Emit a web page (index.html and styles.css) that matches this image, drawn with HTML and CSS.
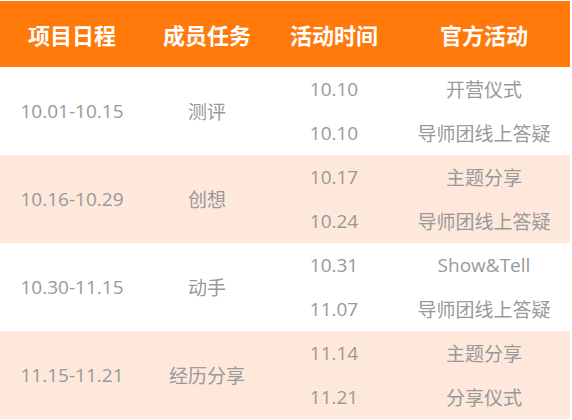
FILE: index.html
```html
<!DOCTYPE html>
<html lang="zh-CN">
<head>
<meta charset="utf-8">
<title>项目日程</title>
<link rel="stylesheet" href="styles.css">
</head>
<body>
<div class="wrap">
<table class="schedule">
  <colgroup>
    <col class="c1"><col class="c2"><col class="c3"><col class="c4">
  </colgroup>
  <thead>
    <tr><th>项目日程</th><th>成员任务</th><th>活动时间</th><th>官方活动</th></tr>
  </thead>
  <tbody class="g-white">
    <tr><td rowspan="2">10.01-10.15</td><td rowspan="2">测评</td><td>10.10</td><td>开营仪式</td></tr>
    <tr><td>10.10</td><td>导师团线上答疑</td></tr>
  </tbody>
  <tbody class="g-peach">
    <tr><td rowspan="2">10.16-10.29</td><td rowspan="2">创想</td><td>10.17</td><td>主题分享</td></tr>
    <tr><td>10.24</td><td>导师团线上答疑</td></tr>
  </tbody>
  <tbody class="g-white">
    <tr><td rowspan="2">10.30-11.15</td><td rowspan="2">动手</td><td>10.31</td><td>Show&amp;Tell</td></tr>
    <tr><td>11.07</td><td>导师团线上答疑</td></tr>
  </tbody>
  <tbody class="g-peach">
    <tr><td rowspan="2">11.15-11.21</td><td rowspan="2">经历分享</td><td>11.14</td><td>主题分享</td></tr>
    <tr><td>11.21</td><td>分享仪式</td></tr>
  </tbody>
</table>
</div>
</body>
</html>
```
FILE: styles.css
```css
html, body {
  margin: 0;
  padding: 0;
  background: #ffffff;
}
.wrap {
  padding-top: 1px;
  width: 570px;
}
.schedule {
  width: 570px;
  border-collapse: collapse;
  table-layout: fixed;
  font-family: "Open Sans", "Noto Sans CJK SC", sans-serif;
}
.c1 { width: 144px; }
.c2 { width: 126px; }
.c3 { width: 128px; }
.c4 { width: 172px; }
.schedule th {
  height: 66px;
  padding: 0;
  background: #ff790b;
  color: #ffffff;
  font-size: 22px;
  font-weight: 700;
  text-align: center;
  vertical-align: middle;
}
.schedule td {
  height: 44px;
  padding: 0;
  color: #999999;
  font-size: 19px;
  text-align: center;
  vertical-align: middle;
  white-space: nowrap;
}
.g-white td { background: #ffffff; }
.g-peach td { background: #fde8db; }
```
